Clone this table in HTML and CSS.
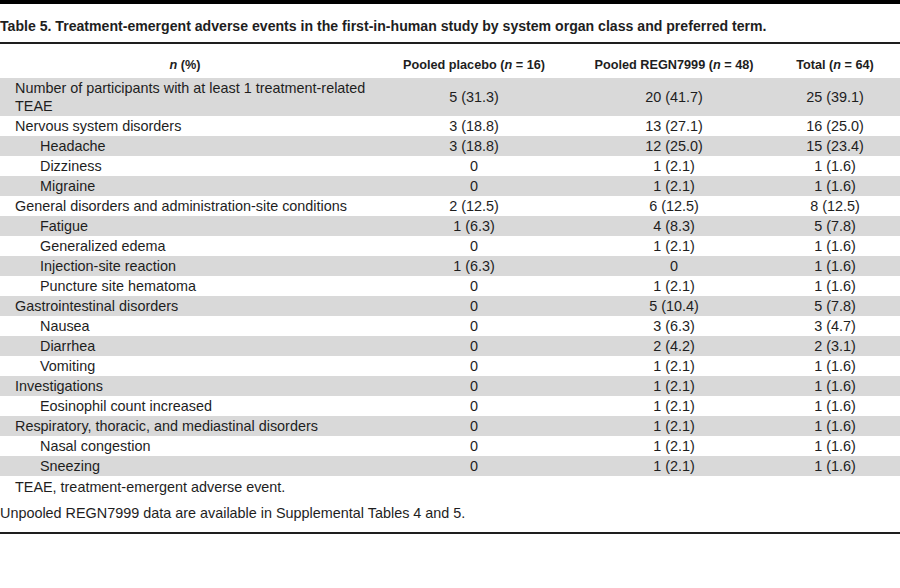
FILE: index.html
```html
<!DOCTYPE html>
<html lang="en">
<head>
    <meta charset="UTF-8">
    <title>Table 5</title>
    <link rel="stylesheet" href="styles.css">
</head>
<body>
    <div class="table-wrap">
        <h1 class="caption">Table 5. Treatment-emergent adverse events in the first-in-human study by system organ class and preferred term.</h1>
        <table class="teae">
            <thead>
                <tr>
                    <th class="col-term"><i>n</i> (%)</th>
                    <th class="col-a">Pooled placebo (<i>n</i> = 16)</th>
                    <th class="col-b">Pooled REGN7999 (<i>n</i> = 48)</th>
                    <th class="col-c">Total (<i>n</i> = 64)</th>
                </tr>
            </thead>
            <tbody>
                <tr><td>Number of participants with at least 1 treatment-related<br>TEAE</td><td>5 (31.3)</td><td>20 (41.7)</td><td>25 (39.1)</td></tr>
                <tr><td>Nervous system disorders</td><td>3 (18.8)</td><td>13 (27.1)</td><td>16 (25.0)</td></tr>
                <tr><td class="sub">Headache</td><td>3 (18.8)</td><td>12 (25.0)</td><td>15 (23.4)</td></tr>
                <tr><td class="sub">Dizziness</td><td>0</td><td>1 (2.1)</td><td>1 (1.6)</td></tr>
                <tr><td class="sub">Migraine</td><td>0</td><td>1 (2.1)</td><td>1 (1.6)</td></tr>
                <tr><td>General disorders and administration-site conditions</td><td>2 (12.5)</td><td>6 (12.5)</td><td>8 (12.5)</td></tr>
                <tr><td class="sub">Fatigue</td><td>1 (6.3)</td><td>4 (8.3)</td><td>5 (7.8)</td></tr>
                <tr><td class="sub">Generalized edema</td><td>0</td><td>1 (2.1)</td><td>1 (1.6)</td></tr>
                <tr><td class="sub">Injection-site reaction</td><td>1 (6.3)</td><td>0</td><td>1 (1.6)</td></tr>
                <tr><td class="sub">Puncture site hematoma</td><td>0</td><td>1 (2.1)</td><td>1 (1.6)</td></tr>
                <tr><td>Gastrointestinal disorders</td><td>0</td><td>5 (10.4)</td><td>5 (7.8)</td></tr>
                <tr><td class="sub">Nausea</td><td>0</td><td>3 (6.3)</td><td>3 (4.7)</td></tr>
                <tr><td class="sub">Diarrhea</td><td>0</td><td>2 (4.2)</td><td>2 (3.1)</td></tr>
                <tr><td class="sub">Vomiting</td><td>0</td><td>1 (2.1)</td><td>1 (1.6)</td></tr>
                <tr><td>Investigations</td><td>0</td><td>1 (2.1)</td><td>1 (1.6)</td></tr>
                <tr><td class="sub">Eosinophil count increased</td><td>0</td><td>1 (2.1)</td><td>1 (1.6)</td></tr>
                <tr><td>Respiratory, thoracic, and mediastinal disorders</td><td>0</td><td>1 (2.1)</td><td>1 (1.6)</td></tr>
                <tr><td class="sub">Nasal congestion</td><td>0</td><td>1 (2.1)</td><td>1 (1.6)</td></tr>
                <tr><td class="sub">Sneezing</td><td>0</td><td>1 (2.1)</td><td>1 (1.6)</td></tr>
            </tbody>
        </table>
        <p class="abbr">TEAE, treatment-emergent adverse event.</p>
        <p class="source">Unpooled REGN7999 data are available in Supplemental Tables 4 and 5.</p>
    </div>
</body>
</html>
```

FILE: styles.css
```css
*{
    padding:0;
    margin:0;
}
body{
    font-family: "Liberation Sans", Arial, sans-serif;
    color:#1e1e1e;
    background:#fff;
}
.table-wrap{
    border-top:4px solid #000;
    border-bottom:2px solid #1e1e1e;
}
.caption{
    font-size:14.1px;
    font-weight:bold;
    line-height:20px;
    padding:12px 0 6px 0;
    border-bottom:2px solid #1e1e1e;
}
.teae{
    width:100%;
    border-collapse:collapse;
    font-size:14.4px;
}
.teae th{
    font-size:12.7px;
    font-weight:bold;
    text-align:center;
    padding:13px 0 5px 0;
    line-height:16px;
}
.teae .col-term{
    width:370px;
}
.teae .col-a{
    width:208px;
}
.teae .col-b{
    width:192px;
}
.teae td{
    text-align:center;
    line-height:18px;
    padding:1px 0;
}
.teae td:first-child{
    text-align:left;
    padding-left:15px;
}
.teae td.sub{
    padding-left:40px;
}
.teae tbody tr:nth-child(odd){
    background:#d9d9d9;
}
.abbr{
    font-size:14.4px;
    line-height:20px;
    padding:1px 0 0 15px;
}
.source{
    font-size:14.4px;
    line-height:20px;
    padding:6px 0 9px 0;
}
```
